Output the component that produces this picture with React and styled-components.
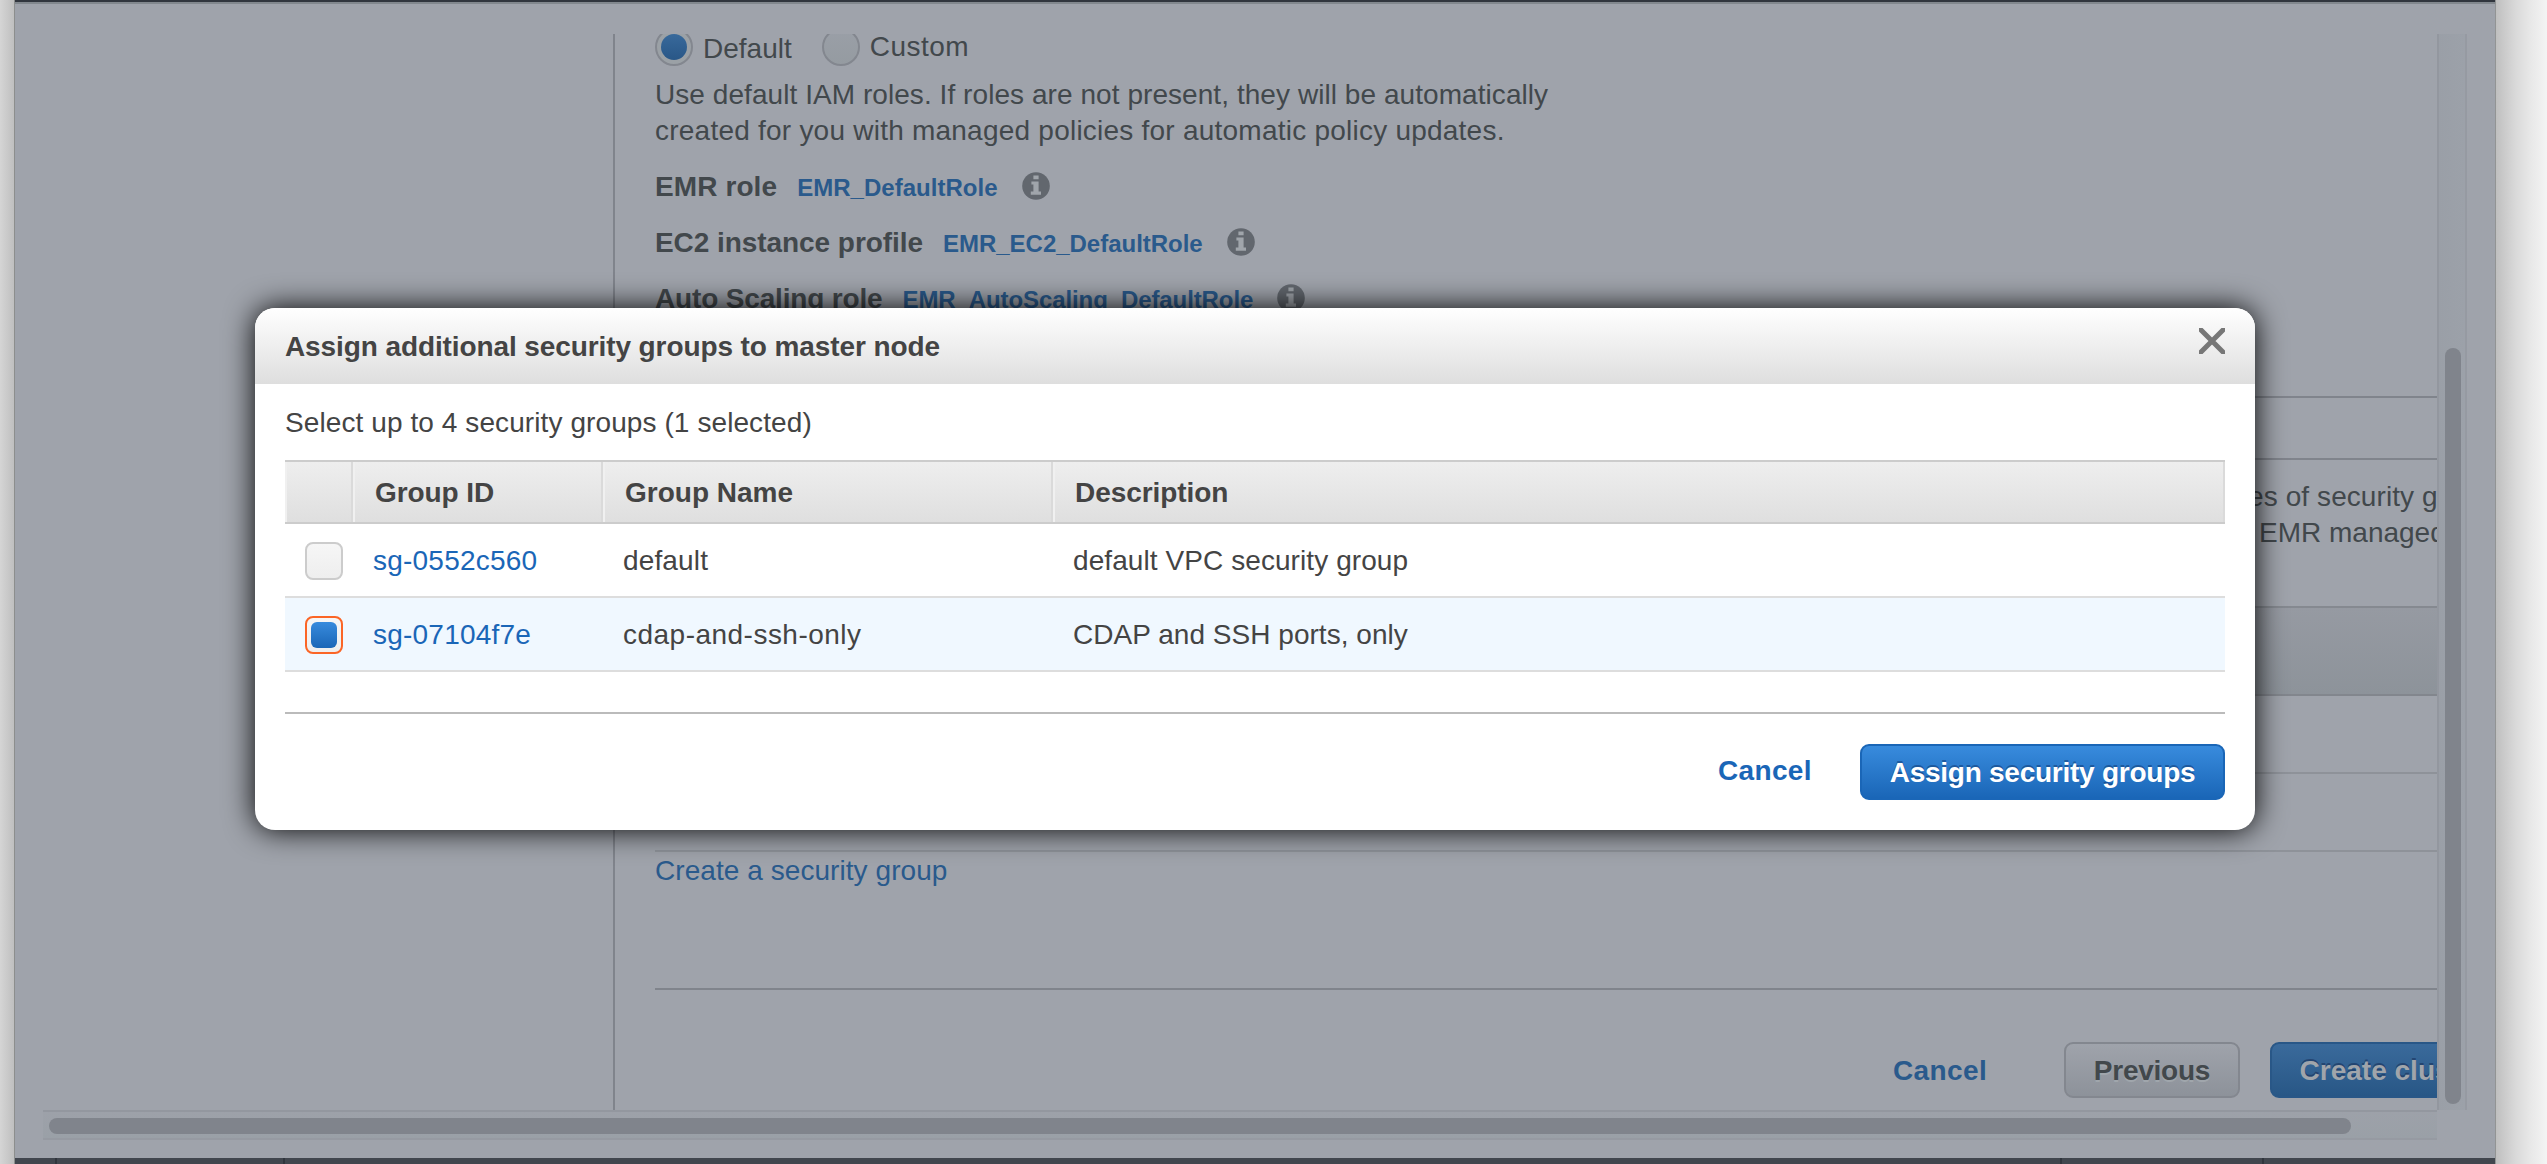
import React from "react";
import styled, { createGlobalStyle, css } from "styled-components";

const GlobalStyle = createGlobalStyle`
  * { box-sizing: border-box; }
  body {
    margin: 0;
    overflow: hidden;
    background: #fff;
    color: #444;
    font-family: "Liberation Sans", Arial, sans-serif;
    font-size: 28px;
  }
`;

/* ---------- window frame ---------- */
const Screen = styled.div`
  position: relative;
  display: flex;
  width: 2547px;
  height: 1164px;
  overflow: hidden;
`;
const LeftEdge = styled.div`
  width: 15px;
  background: linear-gradient(90deg, #d5d5d5, #bfbfbf);
  border-right: 1px solid #8c8e8d;
`;
const RightEdge = styled.div`
  width: 52px;
  border-left: 1px solid #929494;
  background: linear-gradient(90deg, #bfbfbf, #cbcbcb 17%, #dadada 40%, #e8e8e8 68%, #f4f4f4);
`;
const Window = styled.div`
  display: flex;
  flex-direction: column;
  width: 2480px;
  background: #9fa3ab;
`;
const TopBar = styled.div`
  height: 4px;
  background: #31363e;
  border-bottom: 2px solid #82888e;
`;
const BottomBar = styled.div`
  display: flex;
  height: 6px;
  margin-top: 18px;
  background: #41464e;
`;
const BarCell = styled.div`
  width: ${(p) => p.$w}px;
  border-right: 2px solid #30353d;
`;
const Frame = styled.div`
  display: grid;
  grid-template-columns: 2394px 30px;
  grid-template-rows: 1076px 30px;
  padding: 30px 0 0 28px;
`;
const VTrack = styled.div`
  padding: 314px 4px 6px 6px;
  border-left: 2px solid #93979f;
  border-right: 2px solid #969aa2;
  background: linear-gradient(90deg, #9a9fa7, #9ca1a9);
`;
const HTrack = styled.div`
  padding: 6px 86px 4px 6px;
  border-top: 2px solid #93979f;
  border-bottom: 2px solid #969aa2;
  background: linear-gradient(180deg, #9da1a9, #9aa0a7);
`;
const Thumb = styled.div`
  height: 100%;
  border-radius: 8px;
  background: #80848c;
`;

/* ---------- page ---------- */
const Viewport = styled.div`
  display: flex;
  overflow: hidden;
`;
const Sidebar = styled.div`
  flex: 0 0 572px;
  border-right: 2px solid #80848c;
`;
const Main = styled.div`
  flex: 1;
  min-width: 0;
  padding-left: 40px;
  overflow: hidden;
`;
const Line = styled.div`
  height: 36px;
  padding-top: 1px;
  line-height: 35px;
  white-space: pre;
  letter-spacing: ${(p) => p.$ls || 0}px;
  color: ${(p) => p.$color || "inherit"};
  font-weight: ${(p) => (p.$bold ? "bold" : "normal")};
`;
const Dimmed = styled.div`
  color: #42484c;
`;
const RadioRow = styled.div`
  display: flex;
  align-items: flex-start;
  height: 42px;
`;
const Radio = styled.div`
  display: flex;
  flex: none;
  align-items: center;
  justify-content: center;
  width: 38px;
  height: 38px;
  margin-top: -6px;
  border: 2px solid #83878f;
  border-radius: 50%;
  background: linear-gradient(180deg, #9a9fa7, #959ba1);
  ${(p) =>
    p.$on &&
    css`
      background: #9ba1a6;
      &::after {
        content: "";
        width: 26px;
        height: 26px;
        border-radius: 50%;
        background: linear-gradient(180deg, #38699b, #295787);
      }
    `}
`;
const RadioLabel = styled(Line)`
  margin: ${(p) => p.$top}px ${(p) => p.$right || 0}px 0 10px;
`;
const Intro = styled.div`
  margin-bottom: 10px;
`;
const RoleRow = styled.div`
  display: flex;
  align-items: baseline;
  height: 56px;
  padding-top: 10px;
`;
const RoleLink = styled.span`
  margin: 0 24px 0 20px;
  color: #2a5a8c;
  font-size: 24px;
  font-weight: bold;
  line-height: 28px;
  letter-spacing: ${(p) => p.$ls || 0}px;
`;
const InfoSvg = styled.svg`
  align-self: flex-start;
  width: 28px;
  height: 28px;
  margin-top: 4px;
`;
const Rule = styled.div`
  height: 2px;
  margin-top: ${(p) => p.$top}px;
  background: #80848c;
`;
const GroupNote = styled.div`
  display: flex;
  flex-direction: column;
  height: 146px;
  padding-top: 18px;
`;
const NoteLine = styled(Line)`
  padding-left: ${(p) => p.$indent}px;
`;
const BandHeader = styled.div`
  height: 90px;
  border-top: 2px solid #858990;
  border-bottom: 2px solid #82868d;
  background: linear-gradient(180deg, #969aa2, #8d939a);
`;
const BandRow = styled.div`
  height: 78px;
  border-bottom: 2px solid #8e9299;
`;
const WizardFooter = styled.div`
  display: flex;
  width: 2000px;
  margin-top: 52px;
  padding: 0 0 0 1238px;
`;
const Button = styled.div`
  display: flex;
  flex: none;
  justify-content: center;
  width: ${(p) => p.$w}px;
  height: 56px;
  padding-top: 8px;
  border: 2px solid;
  border-radius: 9px;
  ${(p) =>
    ({
      primary: css`
        color: #fff;
        border-color: #1a66b7;
        background: linear-gradient(180deg, #388bdd, #1a66b7);
        text-shadow: 0 -2px 0 rgba(0, 30, 80, 0.4);
      `,
      dimPrimary: css`
        margin-left: 30px;
        color: #a0a5ab;
        border-color: #295787;
        background: linear-gradient(180deg, #3a6a9b, #285786);
        text-shadow: 0 -2px 0 rgba(20, 40, 80, 0.5);
      `,
      dim: css`
        color: #42484c;
        border-color: #83878f;
        background: linear-gradient(180deg, #9fa3ab, #8d929a);
        text-shadow: 0 2px 0 #a0a6ac;
      `,
    })[p.$kind]}
`;
const CancelSlot = styled.div`
  flex: none;
  width: ${(p) => p.$w}px;
  padding-top: ${(p) => p.$top}px;
`;

/* ---------- dialog ---------- */
const Dialog = styled.div`
  position: absolute;
  left: 255px;
  top: 308px;
  width: 2000px;
  height: 522px;
  border-radius: 20px;
  background: #fff;
  box-shadow: 0 0 30px #000;
`;
const DialogHeader = styled.div`
  display: flex;
  justify-content: space-between;
  height: 76px;
  padding: 20px 30px 0;
  border-radius: 20px 20px 0 0;
  background: linear-gradient(180deg, #fff, #dedede);
`;
const CloseSvg = styled.svg`
  width: 26px;
  height: 26px;
`;
const DialogBody = styled.div`
  padding: 20px 30px 0;
`;
const Table = styled.div`
  margin-top: 20px;
`;
const rowGrid = css`
  display: grid;
  grid-template-columns: 68px 250px 450px 1fr;
`;
const HeadRow = styled.div`
  ${rowGrid}
  height: 64px;
  border-top: 2px solid #ccc;
  border-bottom: 2px solid #ccc;
  background: linear-gradient(180deg, #eee, #dfdfdf);
`;
const HeadCell = styled.div`
  padding: 12px 0 0 20px;
  border-left: 2px solid #f0f0f0;
  border-right: 2px solid #dadada;
`;
const Row = styled.div`
  ${rowGrid}
  height: 74px;
  border-bottom: 2px solid #ddd;
  background: ${(p) => (p.$selected ? "#f0f8ff" : "#fff")};
`;
const Cell = styled.div`
  padding: 18px 0 0 20px;
`;
const Checkbox = styled.div`
  display: flex;
  align-items: center;
  justify-content: center;
  width: 38px;
  height: 38px;
  border: 2px solid ${(p) => (p.$on ? "#fb6526" : "#ccc")};
  border-radius: 8px;
  background: linear-gradient(180deg, #f6f6f6, #eee);
  ${(p) =>
    p.$on &&
    css`
      &::after {
        content: "";
        width: 26px;
        height: 26px;
        border-radius: 6px;
        background: linear-gradient(180deg, #388bdd, #1a66b7);
      }
    `}
`;
const DialogFooter = styled.div`
  display: flex;
  justify-content: flex-end;
  margin-top: 40px;
  padding-top: 30px;
  border-top: 2px solid #bbb;
`;

const InfoIcon = () => (
  <InfoSvg viewBox="0 0 28 28">
    <circle cx="14" cy="14" r="13.8" fill="#62676e" />
    <path fill="#a0a5ab" d="M11.4 3.5h5.2v3.8h-5.2zM9.4 9.6h7.2v10h2.4v3.2H8.8v-3.2h2.6v-7H9.4z" />
  </InfoSvg>
);

const roles = [
  { label: "EMR role", ls: 0.1, role: "EMR_DefaultRole", rls: 0.03 },
  { label: "EC2 instance profile", ls: -0.06, role: "EMR_EC2_DefaultRole", rls: -0.02 },
  { label: "Auto Scaling role", ls: -0.16, role: "EMR_AutoScaling_DefaultRole", rls: -0.1 },
];

const groups = [
  { id: "sg-0552c560", name: "default", nls: 0.15, desc: "default VPC security group", dls: 0.08, on: false },
  { id: "sg-07104f7e", name: "cdap-and-ssh-only", nls: 0.48, desc: "CDAP and SSH ports, only", dls: 0.03, on: true },
];

export default function App() {
  return (
    <Screen>
      <GlobalStyle />
      <LeftEdge />
      <Window>
        <TopBar />
        <Frame>
          <Viewport>
            <Sidebar />
            <Main>
              <Dimmed>
                <RadioRow>
                  <Radio $on />
                  <RadioLabel $top={-4} $right={30}>Default</RadioLabel>
                  <Radio />
                  <RadioLabel $top={-6} $ls={0.5}>Custom</RadioLabel>
                </RadioRow>
                <Intro>
                  <Line $ls={0.06}>Use default IAM roles. If roles are not present, they will be automatically</Line>
                  <Line $ls={0.23}>created for you with managed policies for automatic policy updates.</Line>
                </Intro>
                {roles.map((r) => (
                  <RoleRow key={r.role}>
                    <Line $bold $ls={r.ls}>{r.label}</Line>
                    <RoleLink $ls={r.rls}>{r.role}</RoleLink>
                    <InfoIcon />
                  </RoleRow>
                ))}
                <Rule $top={70} />
                <Rule $top={60} />
                <GroupNote>
                  <NoteLine $indent={1555.5} $ls={0.08}>types of security groups</NoteLine>
                  <NoteLine $indent={1604}>EMR managed</NoteLine>
                </GroupNote>
                <BandHeader />
                <BandRow />
                <BandRow />
                <Line $color="#2a5a8c" $ls={0.06}>Create a security group</Line>
                <Rule $top={100} />
                <WizardFooter>
                  <CancelSlot $w={171} $top={10}>
                    <Line $bold $color="#2a5a8c" $ls={0.4}>Cancel</Line>
                  </CancelSlot>
                  <Button $kind="dim" $w={176}>
                    <Line $bold $ls={-0.24}>Previous</Line>
                  </Button>
                  <Button $kind="dimPrimary" $w={246}>
                    <Line $bold>Create cluster</Line>
                  </Button>
                </WizardFooter>
              </Dimmed>
            </Main>
          </Viewport>
          <VTrack><Thumb /></VTrack>
          <HTrack><Thumb /></HTrack>
        </Frame>
        <BottomBar>
          <BarCell $w={42} />
          <BarCell $w={228} />
          <BarCell $w={1777} />
          <BarCell $w={202} />
        </BottomBar>
      </Window>
      <RightEdge />

      <Dialog>
        <DialogHeader>
          <Line $bold $ls={-0.1}>Assign additional security groups to master node</Line>
          <CloseSvg viewBox="0 0 26 26">
            <path d="M0 0L26 26M26 0L0 26" stroke="#777" strokeWidth="5" />
          </CloseSvg>
        </DialogHeader>
        <DialogBody>
          <Line $ls={0.09}>Select up to 4 security groups (1 selected)</Line>
          <Table>
            <HeadRow>
              <HeadCell />
              <HeadCell><Line $bold $ls={-0.08}>Group ID</Line></HeadCell>
              <HeadCell><Line $bold>Group Name</Line></HeadCell>
              <HeadCell><Line $bold $ls={-0.06}>Description</Line></HeadCell>
            </HeadRow>
            {groups.map((g) => (
              <Row key={g.id} $selected={g.on}>
                <Cell><Checkbox $on={g.on} /></Cell>
                <Cell><Line $color="#1a66b7" $ls={0.22}>{g.id}</Line></Cell>
                <Cell><Line $ls={g.nls}>{g.name}</Line></Cell>
                <Cell><Line $ls={g.dls}>{g.desc}</Line></Cell>
              </Row>
            ))}
          </Table>
          <DialogFooter>
            <CancelSlot $w={142} $top={8}>
              <Line $bold $color="#1a66b7" $ls={0.35}>Cancel</Line>
            </CancelSlot>
            <Button $kind="primary" $w={365}>
              <Line $bold $ls={-0.25}>Assign security groups</Line>
            </Button>
          </DialogFooter>
        </DialogBody>
      </Dialog>
    </Screen>
  );
}
